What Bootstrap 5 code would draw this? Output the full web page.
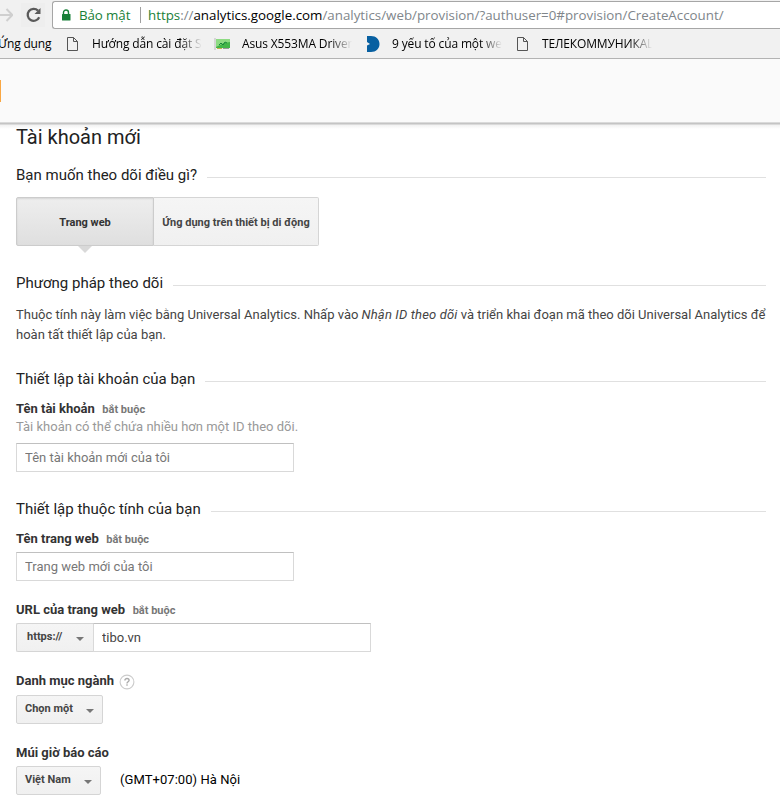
<!DOCTYPE html>
<html lang="vi">
<head>
<meta charset="utf-8">
<meta name="viewport" content="width=device-width, initial-scale=1">
<title>Tài khoản mới</title>
<link rel="stylesheet" href="https://cdn.jsdelivr.net/npm/bootstrap@5.3.0/dist/css/bootstrap.min.css">
<style>
html, body { overflow: hidden; }
body { font-family: Roboto, "Liberation Sans", sans-serif; font-size: 13px; line-height: 18px; color: #444; background: #fff; width: 780px; height: 804px; }
svg { display: block; flex: none; }
.chrome-font { font-family: "Open Sans", "Noto Sans", sans-serif; color: #000; white-space: nowrap; }
.toolbar { height: 29px; background: #f1f1f1; padding-top: 1px; }
.reload-btn { width: 24px; height: 24px; margin: 2px 7px 0 8px; background: #eee; padding: 3px 3px 3px 4px; }
.omnibox { height: 28px; border: 1px solid #a6a6a6; border-right: 0; border-radius: 3px 0 0 3px; background: #fff; padding-left: 8px; font-size: 13.33px; line-height: 26px; }
.secure { color: #188038; }
.secure-label { margin-left: 8px; width: 52px; letter-spacing: -.1px; }
.url-rest { color: #80868b; }
.omni-sep { width: 1px; height: 16px; background: #a0a0a0; margin: 0 7px 0 9px; }
.bookmarks { height: 30px; background: #f1f1f1; border-bottom: 1px solid #b3b3b3; font-size: 12px; line-height: 29px; }
.bm-apps { width: 53px; margin-left: -2px; letter-spacing: -.2px; }
.bm-label { width: 110px; overflow: hidden; letter-spacing: -.14px; -webkit-mask-image: linear-gradient(to right, #000 calc(100% - 22px), transparent); mask-image: linear-gradient(to right, #000 calc(100% - 22px), transparent); }
.app-header { height: 63px; background: #fafafa; }
.brand-bar { width: 1px; height: 22px; background: #f9a743; margin-top: 21px; }
.header-edge { height: 7px; background: linear-gradient(#dadada 0 1px, #c4c4c4 1px 2px, #dadada 2px 3px, #f1f1f1 3px, #fff 7px); margin-bottom: -4px; }
.page-body { padding: 0 14px 0 16px; }
.page-title { font-size: 20px; line-height: 24px; font-weight: 400; color: #222; margin: 0; position: relative; }
.sec { font-size: 15px; line-height: 20px; height: 20px; font-weight: 400; color: #222; margin: 0; white-space: nowrap; }
.sec::after { content: ""; flex: 1; height: 1px; background: #e0e0e0; margin: 5px 0 0 10px; }
.tab-btn { height: 49px; border: 1px solid #d5d5d5; font-size: 11px; font-weight: 700; color: #444; background: linear-gradient(#f5f5f5, #f0f0f0); white-space: nowrap; padding: 2px 0 0; }
.tab-btn.site { width: 138px; border-color: #ccc; border-radius: 2px 0 0 2px; background: linear-gradient(#eee, #dfdfdf); box-shadow: inset 0 1px 2px rgba(0,0,0,.1); color: #333; }
.tab-btn.app { width: 165px; border-left: 0; border-radius: 0 2px 2px 0; }
.tab-caret { position: absolute; left: 62px; top: 49px; }
.copy { line-height: 20px; margin: 12px 0 0; white-space: nowrap; letter-spacing: .003px; }
.copy em { letter-spacing: .16px; }
.lbl { font-weight: 700; color: #333; line-height: 18px; height: 18px; display: flex; white-space: nowrap; }
.req { font-size: 11px; color: #777; margin-left: 7.5px; padding-top: 1px; }
.hint { color: #999; }
.field { width: 278px; height: 29px; border: 1px solid #d9d9d9; border-top-color: #c0c0c0; border-radius: 0; padding: 0 8px; font-size: 13px; color: #444; background: #fff; }
.field::placeholder { color: #777; opacity: 1; }
.pick { height: 29px; border: 1px solid #d5d5d5; border-radius: 2px; background: linear-gradient(#f5f5f5, #f0f0f0); font-size: 11px; line-height: 16px; font-weight: 700; color: #444; padding: 0 9px 2px 8px; white-space: nowrap; }
.pick svg { margin: 4px -1px 0 0; }
.pick.scheme { width: 77px; padding: 0 10px 2px 10px; }
</style>
</head>
<body>
<div class="chrome-font">
  <div class="toolbar d-flex">
    <svg width="13" height="28" viewBox="0 0 13 28" fill="none" stroke="#cfcfcf" stroke-width="2"><path d="M0 14H12M6.5 8L12.4 14L6.5 20"/></svg>
    <div class="reload-btn"><svg width="17" height="18" viewBox="0 0 17 18"><path d="M14.2 11.2A6 6 0 1 1 13 4.6" fill="none" stroke="#5a5a5a" stroke-width="2.3"/><path d="M15.5 2v6h-6z" fill="#5a5a5a"/></svg></div>
    <div class="omnibox d-flex align-items-center flex-grow-1">
      <svg width="10" height="12" viewBox="0 0 10 12"><path d="M2.5 6V3.5a2.5 2.5 0 0 1 5 0V6" fill="none" stroke="#188038" stroke-width="1.4"/><rect x="1" y="5" width="8.5" height="6.5" rx=".5" fill="#188038"/></svg>
      <span class="secure secure-label">Bảo mật</span>
      <span class="omni-sep"></span>
      <span><span class="secure">https</span><span class="url-rest">://</span>analytics.google.com<span class="url-rest">/analytics/web/provision/?authuser=0#provision/CreateAccount/</span></span>
    </div>
  </div>
  <div class="bookmarks d-flex align-items-center">
    <span class="bm-apps">Ứng dụng</span>
    <svg width="11" height="14" viewBox="0 0 11 14" style="margin-left:16px" fill="none" stroke="#555"><path d="M.5.5H6.5L10.500 4.500V13.500H.5zM6.500.5V4.500H10.500"/></svg>
    <span class="bm-label" style="margin-left:14px">Hướng dẫn cài đặt SSL</span>
    <svg width="17" height="12" viewBox="0 0 17 12" style="margin-left:12px"><path d="M1 0v12" stroke="#bbb"/><rect x="2" y="1" width="14" height="9" fill="#43b649"/><path d="M2 1h14v3l-6 1-8 4z" fill="#8edb83"/><path d="M5 7l2-2 2 2 2-3 2 1" stroke="#16863b" fill="none"/><path d="M3 10.5h5" stroke="#c6b04d"/><path d="M9 10.5h6" stroke="#999"/></svg>
    <span class="bm-label" style="margin-left:11px">Asus X553MA Drivers</span>
    <svg width="13" height="16" viewBox="0 0 13 16" style="margin-left:15px"><path d="M0 0h4c5 0 8.500 3.500 8.500 8S9 16 4 16H0V9.500L3 8 0 6z" fill="#0860a1"/></svg>
    <span class="bm-label" style="margin-left:12px">9 yếu tố của một website</span>
    <svg width="11" height="14" viewBox="0 0 11 14" style="margin-left:15px" fill="none" stroke="#555"><path d="M.5.5H6.500L10.500 4.500V13.500H.5zM6.500.5V4.500H10.500"/></svg>
    <span class="bm-label" style="margin-left:14px">ТЕЛЕКОММУНИКАЦИИ</span>
  </div>
</div>
<header class="app-header d-flex"><div class="brand-bar"></div></header>
<div class="header-edge"></div>

<main class="page-body">
  <h1 class="page-title">Tài khoản mới</h1>
  <h2 class="sec d-flex align-items-center" style="margin-top:16px">Bạn muốn theo dõi điều gì?</h2>
  <div class="d-flex position-relative" style="margin-top:12px">
    <button class="tab-btn site" type="button">Trang web</button>
    <button class="tab-btn app" type="button">Ứng dụng trên thiết bị di động</button>
    <svg class="tab-caret" width="14" height="7" viewBox="0 0 14 7"><path d="M0 0H14L7 7z" fill="#d9d9d9"/></svg>
  </div>

  <h2 class="sec d-flex align-items-center" style="margin-top:27px">Phương pháp theo dõi</h2>
  <p class="copy">Thuộc tính này làm việc bằng Universal Analytics. Nhấp vào <em>Nhận ID theo dõi</em> và triển khai đoạn mã theo dõi Universal Analytics để<br>hoàn tất thiết lập của bạn.</p>

  <h2 class="sec d-flex align-items-center" style="margin-top:24px">Thiết lập tài khoản của bạn</h2>
  <label class="lbl" for="acc" style="margin-top:11px">Tên tài khoản <span class="req">bắt buộc</span></label>
  <div class="hint">Tài khoản có thể chứa nhiều hơn một ID theo dõi.</div>
  <input class="field d-block" id="acc" type="text" placeholder="Tên tài khoản mới của tôi" style="margin-top:7px">

  <h2 class="sec d-flex align-items-center" style="margin-top:27px">Thiết lập thuộc tính của bạn</h2>
  <label class="lbl" for="site" style="margin-top:11px">Tên trang web <span class="req">bắt buộc</span></label>
  <input class="field d-block" id="site" type="text" placeholder="Trang web mới của tôi" style="margin-top:4px">

  <label class="lbl" for="addr" style="margin-top:20px">URL của trang web <span class="req">bắt buộc</span></label>
  <div class="d-flex" style="margin-top:4px">
    <button class="pick scheme d-flex align-items-center justify-content-between rounded-end-0 border-end-0" type="button"><span>https://</span><svg width="8" height="4" viewBox="0 0 8 4"><path d="M0 0H8L4 4z" fill="#777"/></svg></button>
    <input class="field" id="addr" type="text" value="tibo.vn">
  </div>

  <div class="lbl align-items-center" style="margin-top:20px">Danh mục ngành
    <svg width="16" height="16" viewBox="0 0 16 16" style="margin:1px 0 0 4.500px"><circle cx="8" cy="8" r="6.900" fill="#fff" stroke="#ccc" stroke-width="1.100"/><path d="M5.900 6.400C5.900 3.800 10.100 3.900 10.100 6.300C10.100 7.700 8 7.800 8 9.400" fill="none" stroke="#aaa" stroke-width="1.400"/><rect x="7.300" y="10.300" width="1.400" height="1.400" fill="#aaa"/></svg>
  </div>
  <button class="pick d-flex align-items-center justify-content-between" type="button" style="width:87px;margin-top:5px"><span>Chọn một</span><svg width="8" height="4" viewBox="0 0 8 4"><path d="M0 0H8L4 4z" fill="#777"/></svg></button>

  <div class="lbl" style="margin-top:20px">Múi giờ báo cáo</div>
  <div class="d-flex align-items-center" style="margin-top:4px">
    <button class="pick d-flex align-items-center justify-content-between" type="button" style="width:85px"><span>Việt Nam</span><svg width="8" height="4" viewBox="0 0 8 4"><path d="M0 0H8L4 4z" fill="#777"/></svg></button>
    <span class="text-black" style="margin-left:19px;padding-bottom:2px;letter-spacing:.06px">(GMT+07:00) Hà Nội</span>
  </div>
</main>
<script src="https://cdn.jsdelivr.net/npm/bootstrap@5.3.0/dist/js/bootstrap.bundle.min.js"></script>
</body>
</html>
